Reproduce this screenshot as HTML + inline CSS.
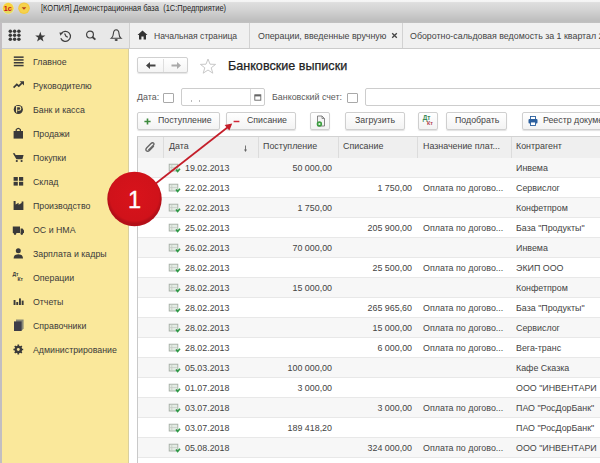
<!DOCTYPE html>
<html><head><meta charset="utf-8">
<style>
*{margin:0;padding:0;box-sizing:border-box}
html,body{width:600px;height:463px;overflow:hidden;background:#fff;font-family:"Liberation Sans",sans-serif;color:#444}
.abs{position:absolute}
#title{left:0;top:0;width:600px;height:23px;background:linear-gradient(#f6f6f6 0,#f4f4f4 1.5px,#dedede 2.6px,#d5d5d5 9px,#c7c7c7 16px,#bdbdbd 21px,#c2c2c2 23px)}
#title .t{left:41px;top:3.4px;font-size:9px;color:#262626;white-space:pre;transform:scaleX(0.834);transform-origin:0 0}
#panel{left:0;top:23px;width:129px;height:26px;background:#e8e8e8;border-bottom:1px solid #cbcbcb}
#tabs{left:129px;top:23px;width:471px;height:26px;background:#f0f0f0;border-bottom:1px solid #cbcbcb;border-left:1px solid #d0d0d0}
.tab{position:absolute;top:0;height:25px;border-right:1px solid #d2d2d2;font-size:8.85px;color:#444;white-space:pre}
.tab span{position:absolute;top:8px}
#side{left:0;top:49px;width:129px;height:414px;background:#fae89b;border-right:1px solid #d9cf9f}
#lb{left:0;top:23px;width:2px;height:440px;background:#c2bec2}
.si{position:absolute;left:33px;font-size:8.8px;color:#3a3a3a;white-space:pre}
.ico{position:absolute}
.btn{position:absolute;top:112px;height:18px;border:1px solid #cfcfcf;border-radius:2px;background:linear-gradient(#fff,#f3f3f3);box-shadow:0 1px 1px rgba(0,0,0,.12);font-size:8.8px;color:#444;white-space:pre}
.btn span{position:absolute;top:2.2px}
#tbl{left:137px;top:136px;width:463px;height:327px;border-left:1px solid #c9c9c9;border-top:1px solid #d2d2d2}
.hdr{position:absolute;left:0;top:0;width:463px;height:22px;background:#efefef;border-bottom:1px solid #d6d6d6}
.row{position:absolute;left:0;width:463px;height:20px;border-bottom:1px solid #e8e8e8}
.row.g{background:#f7f7f7}
.c{position:absolute;top:5px;font-size:8.9px;color:#444;white-space:pre}
.cd{position:absolute;top:0;width:1px;height:21px;background:#dcdcdc}
</style></head><body>
<div id="title" class="abs">
  <svg class="abs" style="left:0;top:0" width="36" height="20" viewBox="0 0 36 20">
    <circle cx="8.2" cy="8.2" r="6.2" fill="#f0e9c0" opacity="0.6"/>
    <circle cx="8.2" cy="8.2" r="5.4" fill="#f7d23c"/>
    <path d="M3.2 10 A5.4 5.4 0 0 0 13.2 10 Z" fill="#dfe06a" opacity="0.7"/>
    <text x="3.6" y="10.8" font-family="Liberation Sans" font-weight="bold" font-size="7" fill="#c8141a" transform="scale(1.05,1)">1с</text>
    <circle cx="24" cy="8.2" r="5.8" fill="#f2c93e"/>
    <circle cx="24" cy="8.2" r="4.6" fill="#f6d24c"/>
    <path d="M21.6 7.3 L26.4 7.3 L24 9.8 Z" fill="#b8421c"/>
  </svg>
  <div class="abs t">[КОПИЯ] Демонстрационная база  (1С:Предприятие)</div>
</div>
<div id="panel" class="abs">
  <svg class="abs" style="left:0;top:0" width="129" height="25" viewBox="0 0 129 25">
    <g fill="#3a3a3a">
      <circle cx="10.3" cy="8.2" r="1.75"/><circle cx="14.6" cy="8.2" r="1.75"/><circle cx="18.9" cy="8.2" r="1.75"/><circle cx="10.3" cy="12.2" r="1.75"/><circle cx="14.6" cy="12.2" r="1.75"/><circle cx="18.9" cy="12.2" r="1.75"/><circle cx="10.3" cy="16.2" r="1.75"/><circle cx="14.6" cy="16.2" r="1.75"/><circle cx="18.9" cy="16.2" r="1.75"/>
      <path d="M40.3 8.8 L41.6 12.4 L45.4 12.5 L42.4 14.8 L43.5 18.4 L40.3 16.3 L37.1 18.4 L38.2 14.8 L35.2 12.5 L39 12.4 Z"/>
    </g>
    <g fill="none" stroke="#404040" stroke-width="1.2">
      <path d="M61.3 10.6 A5 5 0 1 1 60.8 15.2"/>
      <path d="M64.6 10.4 L66 13.2 L67.8 14.2"/>
      <circle cx="90" cy="11.6" r="3.4"/>
      <path d="M92.4 14 L95.4 16.6" stroke-width="1.9"/>
      <path d="M111.4 15.2 Q113.3 13.8 113.4 10.6 Q113.6 6.8 116.2 6.7 Q118.8 6.8 119 10.6 Q119.1 13.8 121 15.2 Z" stroke-width="1.1"/>
    </g>
    <path d="M59.4 9.4 L63 9.8 L60.4 12.8 Z" fill="#404040"/>
    <ellipse cx="116.2" cy="17" rx="1.6" ry="0.9" fill="#404040"/>
  </svg>
</div>
<div id="tabs" class="abs">
  <div class="tab" style="left:0;width:120px">
    <svg class="abs" style="left:7px;top:7px" width="11" height="10" viewBox="0 0 11 10"><path d="M5.5 0.5 L10.5 5 L9 5 L9 9.5 L6.6 9.5 L6.6 6.6 L4.4 6.6 L4.4 9.5 L2 9.5 L2 5 L0.5 5 Z" fill="#333"/></svg>
    <span style="left:24px;font-size:8.6px">Начальная страница</span>
  </div>
  <div class="tab" style="left:120px;width:153px">
    <span style="left:8px">Операции, введенные вручную</span>
    <svg class="abs" style="left:141px;top:9px" width="7" height="7" viewBox="0 0 7 7"><path d="M1.2 1.2 L5.8 5.8 M5.8 1.2 L1.2 5.8" stroke="#444" stroke-width="1.3"/></svg>
  </div>
  <div class="tab" style="left:273px;width:260px;border-right:none">
    <span style="left:7px">Оборотно-сальдовая ведомость за 1 квартал 2</span>
  </div>
</div>
<div id="side" class="abs">
  <svg class="abs" style="left:0;top:0" width="34" height="320" viewBox="0 0 34 320" fill="#3a3a3a">
    <!-- Главное y center 12.5 -->
    <rect x="13.8" y="7.4" width="9.8" height="1.5"/><rect x="13.8" y="10.2" width="9.8" height="1.5"/><rect x="13.8" y="13" width="9.8" height="1.5"/><rect x="13.8" y="15.8" width="9.8" height="1.5"/>
    <!-- Руководителю y center 36.5 -->
    <path d="M13.6 38.6 L16.8 35.4 L18.8 37.2 L21.8 34.2" fill="none" stroke="#3a3a3a" stroke-width="1.7"/><path d="M19.6 32.2 L24 32.2 L24 36.6 Z"/>
    <!-- Банк -->
    <circle cx="18.3" cy="60.5" r="4.6"/>
    <path d="M16.6 63.6 L16.6 57.6 L19 57.6 Q20.8 57.6 20.8 59.5 Q20.8 61.3 19 61.3 L17.6 61.3" fill="none" stroke="#fae89b" stroke-width="1.1"/>
    <!-- Продажи -->
    <path d="M13.6 82 L23 82 L23 89.6 L13.6 89.6 Z"/>
    <path d="M16.2 82.4 L16.2 80.6 Q18.3 78 20.4 80.6 L20.4 82.4" fill="none" stroke="#3a3a3a" stroke-width="1.2"/>
    <!-- Покупки -->
    <path d="M12.8 104.2 L14.8 104.2 L15.6 106 L23.6 106 L22.4 110.2 L16.4 110.2 Z"/>
    <circle cx="16.8" cy="112" r="1.1"/><circle cx="21.6" cy="112" r="1.1"/>
    <!-- Склад -->
    <rect x="13.6" y="128" width="4.2" height="3.8"/><rect x="19" y="128" width="4.2" height="3.8"/>
    <rect x="13.6" y="132.8" width="4.2" height="3.8"/><rect x="19" y="132.8" width="4.2" height="3.8"/>
    <!-- Производство -->
    <path d="M13.6 161 L13.6 152 L15.6 152 L15.6 155.6 L18.6 153.8 L18.6 155.8 L21.6 154 L21.6 152.5 L23.4 152.5 L23.4 161 Z"/>
    <!-- ОС и НМА truck -->
    <path d="M12.8 177.6 L20 177.6 L20 184 L12.8 184 Z M20.6 179.4 L22.6 179.4 L24 181.6 L24 184 L20.6 184 Z"/>
    <circle cx="15" cy="184.6" r="1.3"/><circle cx="21.8" cy="184.6" r="1.3"/>
    <!-- Зарплата person -->
    <circle cx="18.3" cy="201.8" r="2.5"/>
    <path d="M13.6 209.6 Q13.6 205.2 18.3 205.2 Q23 205.2 23 209.6 Z"/>
  </svg>
  <svg class="abs" style="left:0;top:215px" width="34" height="150" viewBox="0 0 34 150" fill="#3a3a3a">
    <!-- Операции Дт Кт y center 13.5 -->
    <text x="12.4" y="12" font-size="5" font-weight="bold" font-family="Liberation Sans">Дт</text>
    <text x="17.4" y="17.4" font-size="5" font-weight="bold" font-family="Liberation Sans">Кт</text>
    <!-- Отчеты -->
    <rect x="13.6" y="36" width="1.9" height="5"/><rect x="16.3" y="38" width="1.9" height="3"/><rect x="19" y="34.4" width="1.9" height="6.6"/><rect x="21.7" y="36.6" width="1.9" height="4.4"/>
    <!-- Справочники -->
    <path d="M16 55.6 L23.6 55.6 L23.6 64.4 L21.8 66.4 L16 66.4 Z" fill="#8a8a78"/>
    <path d="M14 57.4 L21.6 57.4 L21.6 67 L14 67 Z" fill="#3d3d48"/>
    <!-- Администрирование gear -->
    <circle cx="18.3" cy="85.5" r="2.9" fill="none" stroke="#3a3a3a" stroke-width="1.8"/>
    <g stroke="#3a3a3a" stroke-width="1.7">
      <path d="M18.3 80.6 L18.3 90.4 M13.4 85.5 L23.2 85.5 M14.8 82 L21.8 89 M21.8 82 L14.8 89"/>
    </g>
    <circle cx="18.3" cy="85.5" r="1.4" fill="#fae89b"/>
  </svg>
  <div class="si" style="top:8px">Главное</div>
  <div class="si" style="top:32px">Руководителю</div>
  <div class="si" style="top:56px">Банк и касса</div>
  <div class="si" style="top:80px">Продажи</div>
  <div class="si" style="top:104px">Покупки</div>
  <div class="si" style="top:128px">Склад</div>
  <div class="si" style="top:152px">Производство</div>
  <div class="si" style="top:176px">ОС и НМА</div>
  <div class="si" style="top:200px">Зарплата и кадры</div>
  <div class="si" style="top:224px">Операции</div>
  <div class="si" style="top:248px">Отчеты</div>
  <div class="si" style="top:272px">Справочники</div>
  <div class="si" style="top:296px">Администрирование</div>
</div>

<div id="lb" class="abs"></div>
<!-- form header -->
<div class="abs" style="left:137px;top:57px;width:51px;height:16px;border:1px solid #d0d0d0;border-radius:2px;background:linear-gradient(#fff,#f4f4f4);box-shadow:0 1px 1px rgba(0,0,0,.1)">
  <div class="abs" style="left:25px;top:1px;width:1px;height:13px;background:#dedede"></div>
  <svg class="abs" style="left:7px;top:3px" width="12" height="9" viewBox="0 0 12 9"><path d="M1 4.5 L5 1 L5 3.6 L10.5 3.6 L10.5 5.4 L5 5.4 L5 8 Z" fill="#444"/></svg>
  <svg class="abs" style="left:32px;top:3px" width="12" height="9" viewBox="0 0 12 9"><path d="M11 4.5 L7 1 L7 3.6 L1.5 3.6 L1.5 5.4 L7 5.4 L7 8 Z" fill="#aaa"/></svg>
</div>
<svg class="abs" style="left:199px;top:58px" width="18" height="16" viewBox="0 0 18 16"><path d="M9 1 L11 6.2 L16.6 6.4 L12.2 9.8 L13.8 15.2 L9 12 L4.2 15.2 L5.8 9.8 L1.4 6.4 L7 6.2 Z" fill="none" stroke="#c8c8c8" stroke-width="1"/></svg>
<div class="abs" style="left:228px;top:59px;font-size:12.6px;color:#222;-webkit-text-stroke:0.25px #222;white-space:pre">Банковские выписки</div>

<div class="abs" style="left:137px;top:92px;font-size:8.9px;color:#5a5a5a;white-space:pre">Дата:</div>
<div class="abs" style="left:163px;top:93px;width:11px;height:10px;border:1px solid #a9a9a9;background:#fff;border-radius:1px"></div>
<div class="abs" style="left:181px;top:88px;width:84px;height:18px;border:1px solid #cdcdcd;border-radius:2px;background:#fff">
  <div class="abs" style="left:68px;top:0;width:1px;height:16px;background:#dcdcdc"></div>
  <div class="abs" style="left:8.5px;top:11px;width:1.5px;height:1.5px;background:#bbb"></div><div class="abs" style="left:16.5px;top:11px;width:1.5px;height:1.5px;background:#bbb"></div>
  <svg class="abs" style="left:72px;top:5px" width="8" height="8" viewBox="0 0 8 8"><rect x="0.8" y="0.8" width="6" height="5.4" fill="none" stroke="#666" stroke-width="0.9"/><rect x="0.8" y="0.8" width="6" height="1.6" fill="#666"/></svg>
</div>
<div class="abs" style="left:272px;top:92px;font-size:8.9px;color:#5a5a5a;white-space:pre">Банковский счет:</div>
<div class="abs" style="left:347px;top:93px;width:11px;height:10px;border:1px solid #a9a9a9;background:#fff;border-radius:1px"></div>
<div class="abs" style="left:365px;top:88px;width:250px;height:18px;border:1px solid #cdcdcd;border-radius:2px;background:#fff"></div>

<div class="btn" style="left:137px;width:83px"><svg class="abs" style="left:6px;top:5px" width="7" height="7" viewBox="0 0 7 7"><path d="M3.5 0.4 V6.6 M0.4 3.5 H6.6" stroke="#3d8a3d" stroke-width="1.6"/></svg><span style="left:20px">Поступление</span></div>
<div class="btn" style="left:226px;width:70px"><svg class="abs" style="left:6px;top:5px" width="7" height="7" viewBox="0 0 7 7"><path d="M0.6 3.5 H6.4" stroke="#d02838" stroke-width="1.5"/></svg><span style="left:20px">Списание</span></div>
<div class="btn" style="left:310px;width:20px">
  <svg class="abs" style="left:4px;top:2px" width="12" height="13" viewBox="0 0 12 13"><path d="M2.5 1 L7 1 L9.5 3.5 L9.5 11 L2.5 11 Z" fill="#f4f4f4" stroke="#777" stroke-width="0.9"/><path d="M7 1 L7 3.5 L9.5 3.5" fill="none" stroke="#777" stroke-width="0.8"/><circle cx="4.4" cy="9" r="2.7" fill="#3a9e3e"/><circle cx="4.4" cy="9" r="1.1" fill="#e8f4e8"/></svg>
</div>
<div class="btn" style="left:345px;width:60px"><span style="left:9px">Загрузить</span></div>
<div class="btn" style="left:418px;width:20px">
  <svg class="abs" style="left:3px;top:1px" width="14" height="14" viewBox="0 0 14 14"><text x="0.8" y="5.8" font-size="6.4" font-family="Liberation Sans" font-weight="bold" fill="#3a8a58">Дт</text><text x="5" y="10.8" font-size="5.4" font-family="Liberation Sans" font-weight="bold" fill="#b04050">Кт</text></svg>
</div>
<div class="btn" style="left:446px;width:61px"><span style="left:8px">Подобрать</span></div>
<div class="btn" style="left:522px;width:90px">
  <svg class="abs" style="left:5px;top:3px" width="10" height="10" viewBox="0 0 10 10"><rect x="2.5" y="0.5" width="5" height="3" fill="#fff" stroke="#2b5f9e" stroke-width="0.9"/><rect x="0.5" y="3" width="9" height="4.6" rx="1" fill="#2b5f9e"/><rect x="2.5" y="6" width="5" height="3.5" fill="#fff" stroke="#2b5f9e" stroke-width="0.9"/></svg>
  <span style="left:20px">Реестр документов</span>
</div>

<!-- table -->
<div id="tbl" class="abs">
  <div class="hdr">
    <svg class="abs" style="left:7px;top:5px" width="11" height="11" viewBox="0 0 11 11"><path d="M3.4 8.2 L8.2 3.4 Q9.6 2 8.5 1 Q7.4 0.2 6 1.6 L1.8 5.8 Q0.2 7.6 1.4 8.8 Q2.8 10 4.4 8.4 L8.8 4" fill="none" stroke="#666" stroke-width="1.4"/></svg>
    <div class="cd" style="left:25px"></div>
    <div class="c" style="left:31px;top:4.2px">Дата</div>
    <svg class="abs" style="left:105px;top:8px" width="5" height="9" viewBox="0 0 5 9"><path d="M2.5 0.5 L2.5 5.6" stroke="#666" stroke-width="0.9"/><path d="M1 4.6 L4 4.6 L2.5 7 Z" fill="#666"/></svg>
    <div class="cd" style="left:120px"></div>
    <div class="c" style="left:125px;top:4.2px">Поступление</div>
    <div class="cd" style="left:200px"></div>
    <div class="c" style="left:205px;top:4.2px">Списание</div>
    <div class="cd" style="left:279px"></div>
    <div class="c" style="left:285px;top:4.2px">Назначение плат...</div>
    <div class="cd" style="left:373px"></div>
    <div class="c" style="left:378px;top:4.2px">Контрагент</div>
  </div>
  <div id="rows"><div class="row g" style="top:21px"><svg class="abs" style="left:30px;top:5px" width="13" height="10" viewBox="0 0 13 10"><rect x="1.2" y="1.2" width="8.6" height="6.8" fill="#e4ebe4" stroke="#a3aca3" stroke-width="0.9"/><path d="M3.8 1.6 V7.6 M1.4 4.6 H9" stroke="#c3cbc3" stroke-width="0.8"/><path d="M8 6.6 L9.6 8.6 L12 5.8" fill="none" stroke="#2f9a48" stroke-width="1.6"/></svg><div class="c" style="left:47px">19.02.2013</div><div class="c" style="right:269px">50 000,00</div><div class="c" style="left:378px">Инвема</div></div>
<div class="row" style="top:41px"><svg class="abs" style="left:30px;top:5px" width="13" height="10" viewBox="0 0 13 10"><rect x="1.2" y="1.2" width="8.6" height="6.8" fill="#e4ebe4" stroke="#a3aca3" stroke-width="0.9"/><path d="M3.8 1.6 V7.6 M1.4 4.6 H9" stroke="#c3cbc3" stroke-width="0.8"/><path d="M8 6.6 L9.6 8.6 L12 5.8" fill="none" stroke="#2f9a48" stroke-width="1.6"/></svg><div class="c" style="left:47px">22.02.2013</div><div class="c" style="right:189px">1 750,00</div><div class="c" style="left:285px">Оплата по догово...</div><div class="c" style="left:378px">Сервислог</div></div>
<div class="row g" style="top:61px"><svg class="abs" style="left:30px;top:5px" width="13" height="10" viewBox="0 0 13 10"><rect x="1.2" y="1.2" width="8.6" height="6.8" fill="#e4ebe4" stroke="#a3aca3" stroke-width="0.9"/><path d="M3.8 1.6 V7.6 M1.4 4.6 H9" stroke="#c3cbc3" stroke-width="0.8"/><path d="M8 6.6 L9.6 8.6 L12 5.8" fill="none" stroke="#2f9a48" stroke-width="1.6"/></svg><div class="c" style="left:47px">22.02.2013</div><div class="c" style="right:269px">1 750,00</div><div class="c" style="left:378px">Конфетпром</div></div>
<div class="row" style="top:81px"><svg class="abs" style="left:30px;top:5px" width="13" height="10" viewBox="0 0 13 10"><rect x="1.2" y="1.2" width="8.6" height="6.8" fill="#e4ebe4" stroke="#a3aca3" stroke-width="0.9"/><path d="M3.8 1.6 V7.6 M1.4 4.6 H9" stroke="#c3cbc3" stroke-width="0.8"/><path d="M8 6.6 L9.6 8.6 L12 5.8" fill="none" stroke="#2f9a48" stroke-width="1.6"/></svg><div class="c" style="left:47px">25.02.2013</div><div class="c" style="right:189px">205 900,00</div><div class="c" style="left:285px">Оплата по догово...</div><div class="c" style="left:378px">База "Продукты"</div></div>
<div class="row g" style="top:101px"><svg class="abs" style="left:30px;top:5px" width="13" height="10" viewBox="0 0 13 10"><rect x="1.2" y="1.2" width="8.6" height="6.8" fill="#e4ebe4" stroke="#a3aca3" stroke-width="0.9"/><path d="M3.8 1.6 V7.6 M1.4 4.6 H9" stroke="#c3cbc3" stroke-width="0.8"/><path d="M8 6.6 L9.6 8.6 L12 5.8" fill="none" stroke="#2f9a48" stroke-width="1.6"/></svg><div class="c" style="left:47px">26.02.2013</div><div class="c" style="right:269px">70 000,00</div><div class="c" style="left:378px">Инвема</div></div>
<div class="row" style="top:121px"><svg class="abs" style="left:30px;top:5px" width="13" height="10" viewBox="0 0 13 10"><rect x="1.2" y="1.2" width="8.6" height="6.8" fill="#e4ebe4" stroke="#a3aca3" stroke-width="0.9"/><path d="M3.8 1.6 V7.6 M1.4 4.6 H9" stroke="#c3cbc3" stroke-width="0.8"/><path d="M8 6.6 L9.6 8.6 L12 5.8" fill="none" stroke="#2f9a48" stroke-width="1.6"/></svg><div class="c" style="left:47px">28.02.2013</div><div class="c" style="right:189px">25 500,00</div><div class="c" style="left:285px">Оплата по догово...</div><div class="c" style="left:378px">ЭКИП ООО</div></div>
<div class="row g" style="top:141px"><svg class="abs" style="left:30px;top:5px" width="13" height="10" viewBox="0 0 13 10"><rect x="1.2" y="1.2" width="8.6" height="6.8" fill="#e4ebe4" stroke="#a3aca3" stroke-width="0.9"/><path d="M3.8 1.6 V7.6 M1.4 4.6 H9" stroke="#c3cbc3" stroke-width="0.8"/><path d="M8 6.6 L9.6 8.6 L12 5.8" fill="none" stroke="#2f9a48" stroke-width="1.6"/></svg><div class="c" style="left:47px">28.02.2013</div><div class="c" style="right:269px">15 000,00</div><div class="c" style="left:378px">Конфетпром</div></div>
<div class="row" style="top:161px"><svg class="abs" style="left:30px;top:5px" width="13" height="10" viewBox="0 0 13 10"><rect x="1.2" y="1.2" width="8.6" height="6.8" fill="#e4ebe4" stroke="#a3aca3" stroke-width="0.9"/><path d="M3.8 1.6 V7.6 M1.4 4.6 H9" stroke="#c3cbc3" stroke-width="0.8"/><path d="M8 6.6 L9.6 8.6 L12 5.8" fill="none" stroke="#2f9a48" stroke-width="1.6"/></svg><div class="c" style="left:47px">28.02.2013</div><div class="c" style="right:189px">265 965,60</div><div class="c" style="left:285px">Оплата по догово...</div><div class="c" style="left:378px">База "Продукты"</div></div>
<div class="row g" style="top:181px"><svg class="abs" style="left:30px;top:5px" width="13" height="10" viewBox="0 0 13 10"><rect x="1.2" y="1.2" width="8.6" height="6.8" fill="#e4ebe4" stroke="#a3aca3" stroke-width="0.9"/><path d="M3.8 1.6 V7.6 M1.4 4.6 H9" stroke="#c3cbc3" stroke-width="0.8"/><path d="M8 6.6 L9.6 8.6 L12 5.8" fill="none" stroke="#2f9a48" stroke-width="1.6"/></svg><div class="c" style="left:47px">28.02.2013</div><div class="c" style="right:189px">15 000,00</div><div class="c" style="left:285px">Оплата по догово...</div><div class="c" style="left:378px">Сервислог</div></div>
<div class="row" style="top:201px"><svg class="abs" style="left:30px;top:5px" width="13" height="10" viewBox="0 0 13 10"><rect x="1.2" y="1.2" width="8.6" height="6.8" fill="#e4ebe4" stroke="#a3aca3" stroke-width="0.9"/><path d="M3.8 1.6 V7.6 M1.4 4.6 H9" stroke="#c3cbc3" stroke-width="0.8"/><path d="M8 6.6 L9.6 8.6 L12 5.8" fill="none" stroke="#2f9a48" stroke-width="1.6"/></svg><div class="c" style="left:47px">28.02.2013</div><div class="c" style="right:189px">6 000,00</div><div class="c" style="left:285px">Оплата по догово...</div><div class="c" style="left:378px">Вега-транс</div></div>
<div class="row g" style="top:221px"><svg class="abs" style="left:30px;top:5px" width="13" height="10" viewBox="0 0 13 10"><rect x="1.2" y="1.2" width="8.6" height="6.8" fill="#e4ebe4" stroke="#a3aca3" stroke-width="0.9"/><path d="M3.8 1.6 V7.6 M1.4 4.6 H9" stroke="#c3cbc3" stroke-width="0.8"/><path d="M8 6.6 L9.6 8.6 L12 5.8" fill="none" stroke="#2f9a48" stroke-width="1.6"/></svg><div class="c" style="left:47px">05.03.2013</div><div class="c" style="right:269px">100 000,00</div><div class="c" style="left:378px">Кафе Сказка</div></div>
<div class="row" style="top:241px"><svg class="abs" style="left:30px;top:5px" width="13" height="10" viewBox="0 0 13 10"><rect x="1.2" y="1.2" width="8.6" height="6.8" fill="#e4ebe4" stroke="#a3aca3" stroke-width="0.9"/><path d="M3.8 1.6 V7.6 M1.4 4.6 H9" stroke="#c3cbc3" stroke-width="0.8"/><path d="M8 6.6 L9.6 8.6 L12 5.8" fill="none" stroke="#2f9a48" stroke-width="1.6"/></svg><div class="c" style="left:47px">01.07.2018</div><div class="c" style="right:269px">3 000,00</div><div class="c" style="left:378px">ООО "ИНВЕНТАРИ</div></div>
<div class="row g" style="top:261px"><svg class="abs" style="left:30px;top:5px" width="13" height="10" viewBox="0 0 13 10"><rect x="1.2" y="1.2" width="8.6" height="6.8" fill="#e4ebe4" stroke="#a3aca3" stroke-width="0.9"/><path d="M3.8 1.6 V7.6 M1.4 4.6 H9" stroke="#c3cbc3" stroke-width="0.8"/><path d="M8 6.6 L9.6 8.6 L12 5.8" fill="none" stroke="#2f9a48" stroke-width="1.6"/></svg><div class="c" style="left:47px">03.07.2018</div><div class="c" style="right:189px">3 000,00</div><div class="c" style="left:285px">Оплата по догово...</div><div class="c" style="left:378px">ПАО "РосДорБанк"</div></div>
<div class="row" style="top:281px"><svg class="abs" style="left:30px;top:5px" width="13" height="10" viewBox="0 0 13 10"><rect x="1.2" y="1.2" width="8.6" height="6.8" fill="#e4ebe4" stroke="#a3aca3" stroke-width="0.9"/><path d="M3.8 1.6 V7.6 M1.4 4.6 H9" stroke="#c3cbc3" stroke-width="0.8"/><path d="M8 6.6 L9.6 8.6 L12 5.8" fill="none" stroke="#2f9a48" stroke-width="1.6"/></svg><div class="c" style="left:47px">03.07.2018</div><div class="c" style="right:269px">189 418,20</div><div class="c" style="left:378px">ПАО "РосДорБанк"</div></div>
<div class="row g" style="top:301px"><svg class="abs" style="left:30px;top:5px" width="13" height="10" viewBox="0 0 13 10"><rect x="1.2" y="1.2" width="8.6" height="6.8" fill="#e4ebe4" stroke="#a3aca3" stroke-width="0.9"/><path d="M3.8 1.6 V7.6 M1.4 4.6 H9" stroke="#c3cbc3" stroke-width="0.8"/><path d="M8 6.6 L9.6 8.6 L12 5.8" fill="none" stroke="#2f9a48" stroke-width="1.6"/></svg><div class="c" style="left:47px">05.08.2018</div><div class="c" style="right:189px">324 000,00</div><div class="c" style="left:285px">Оплата по догово...</div><div class="c" style="left:378px">ООО "ИНВЕНТАРИ</div></div>
<div class="row" style="top:321px"></div></div><!--/rows-->
</div>

<!-- annotation -->
<svg class="abs" style="left:0;top:0" width="600" height="463" viewBox="0 0 600 463">
  <line x1="150" y1="188" x2="228" y2="127" stroke="#c41e2a" stroke-width="1.7"/>
  <path d="M232.2 123.6 L224.6 125 L229.4 130.6 Z" fill="#c41e2a"/>
  <defs><radialGradient id="rg" cx="0.5" cy="0.45" r="0.5"><stop offset="0" stop-color="#d8131b"/><stop offset="0.9" stop-color="#d0121a"/><stop offset="1" stop-color="#b40f18"/></radialGradient></defs>
  <circle cx="134.5" cy="199" r="27.2" fill="url(#rg)"/>
  <text x="134.6" y="208.4" text-anchor="middle" font-family="Liberation Sans" font-size="23.5" fill="#fff" stroke="#fff" stroke-width="0.35">1</text>
</svg>
</body></html>
